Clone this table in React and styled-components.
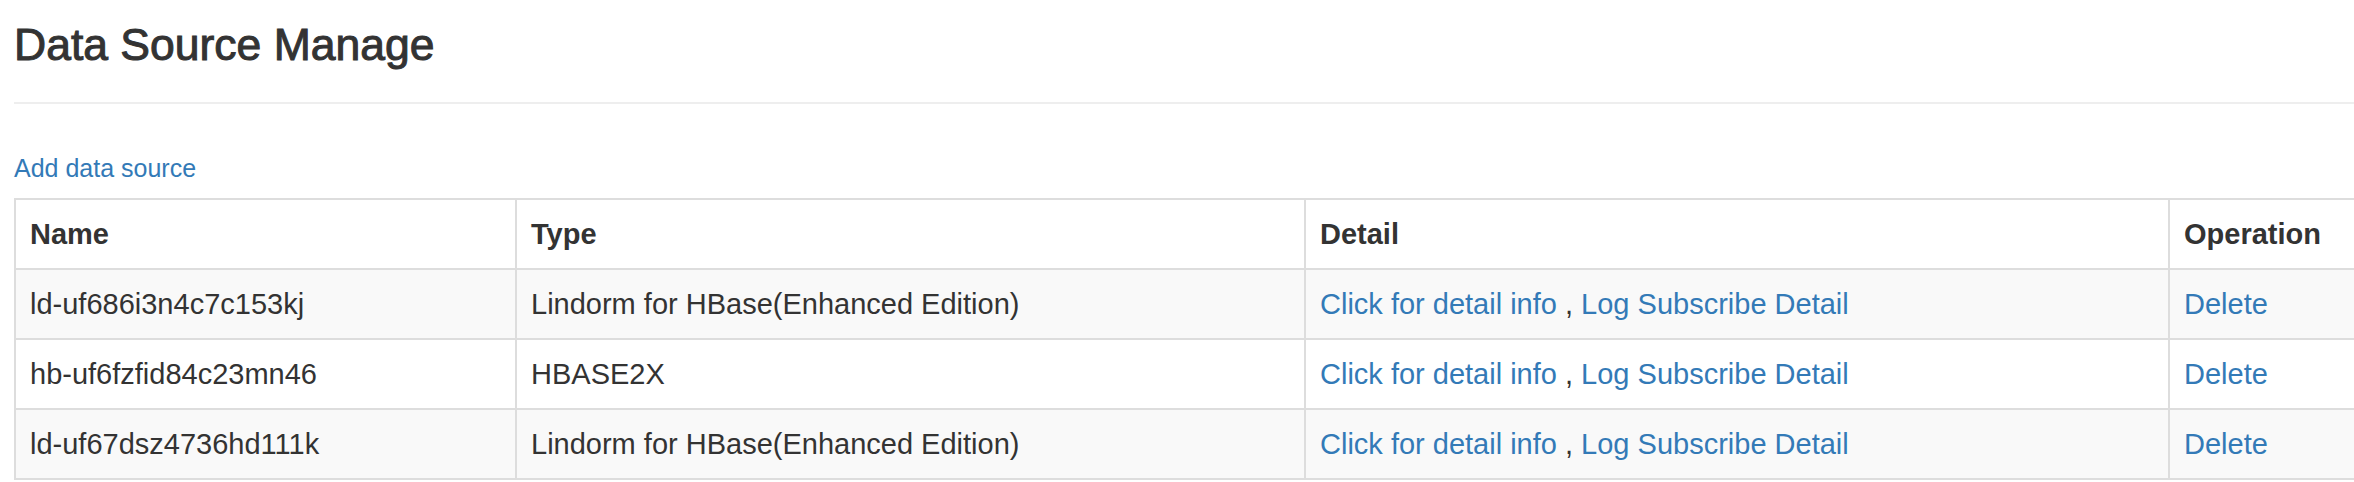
import React from "react";
import styled, { createGlobalStyle } from "styled-components";

const GlobalStyle = createGlobalStyle`
  html, body {
    margin: 0;
    padding: 0;
    background: #fff;
    overflow: hidden;
  }
  body {
    font-family: "Liberation Sans", Arial, Helvetica, sans-serif;
    color: #333;
  }
`;

const Page = styled.div`
  padding-left: 14px;
`;

const PageHeader = styled.div`
  padding-bottom: 33px;
  border-bottom: 2px solid #eee;
`;

const Title = styled.h2`
  margin: 21px 0 0 0;
  font-size: 44.5px;
  line-height: 48px;
  font-weight: 400;
  color: #333;
  -webkit-text-stroke: 1px #333;
`;

const AddLink = styled.a`
  display: block;
  margin-top: 46px;
  font-size: 25px;
  line-height: 36px;
  color: #337ab7;
  text-decoration: none;
  cursor: pointer;
`;

const Table = styled.table`
  margin-top: 12px;
  width: 2420px;
  table-layout: fixed;
  border-collapse: separate;
  border-spacing: 0;
  border-bottom: 2px solid #ddd;
  font-size: 29px;
  line-height: 38px;
`;

const Th = styled.th`
  box-sizing: border-box;
  width: ${(p) => (p.w ? `${p.w}px` : "auto")};
  padding: 15px 14px;
  text-align: left;
  font-weight: 700;
  color: #333;
  border-top: 2px solid #ddd;
  border-left: 2px solid #ddd;
  white-space: nowrap;
`;

const Row = styled.tr`
  background: ${(p) => (p.striped ? "#f9f9f9" : "#fff")};
`;

const Td = styled.td`
  padding: 15px 14px;
  color: #333;
  border-top: 2px solid #ddd;
  border-left: 2px solid #ddd;
  white-space: nowrap;
`;

const Link = styled.a`
  color: #337ab7;
  text-decoration: none;
  cursor: pointer;
`;

const rows = [
  { name: "ld-uf686i3n4c7c153kj", type: "Lindorm for HBase(Enhanced Edition)" },
  { name: "hb-uf6fzfid84c23mn46", type: "HBASE2X" },
  { name: "ld-uf67dsz4736hd111k", type: "Lindorm for HBase(Enhanced Edition)" },
];

export default function App() {
  return (
    <Page>
      <GlobalStyle />
      <PageHeader>
        <Title>Data Source Manage</Title>
      </PageHeader>
      <AddLink>Add data source</AddLink>
      <Table>
        <thead>
          <tr>
            <Th w={501}>Name</Th>
            <Th w={789}>Type</Th>
            <Th w={864}>Detail</Th>
            <Th>Operation</Th>
          </tr>
        </thead>
        <tbody>
          {rows.map((r, i) => (
            <Row key={r.name} striped={i % 2 === 0}>
              <Td>{r.name}</Td>
              <Td>{r.type}</Td>
              <Td>
                <Link>Click for detail info</Link> , <Link>Log Subscribe Detail</Link>
              </Td>
              <Td>
                <Link>Delete</Link>
              </Td>
            </Row>
          ))}
        </tbody>
      </Table>
    </Page>
  );
}
